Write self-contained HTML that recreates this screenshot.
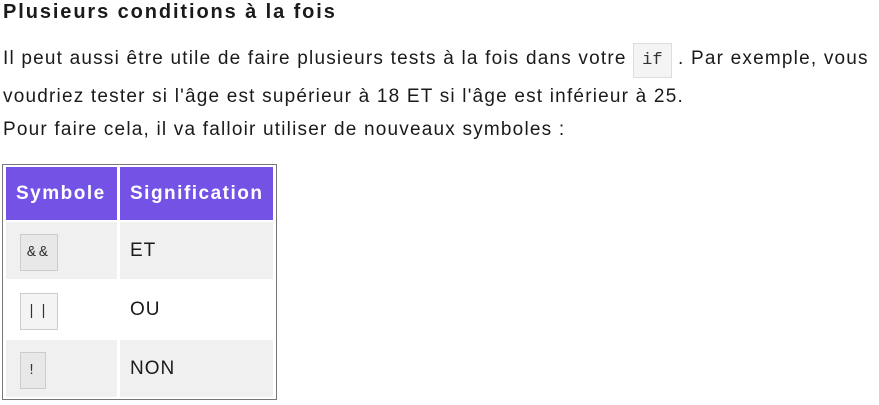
<!DOCTYPE html><html><head><style>
body{margin:0;width:879px;height:405px;background:#fff;font-family:"Liberation Sans",sans-serif;color:#1a1a1a;position:relative;overflow:hidden}
.a{position:absolute;white-space:nowrap}
h1{position:absolute;left:3px;top:1px;margin:0;font-size:20px;font-weight:bold;letter-spacing:1.9px}
.p{font-size:19px;left:3px;letter-spacing:1.2px}
code{font-family:"Liberation Mono",monospace;font-size:17px;background:#f4f4f4;border:1px solid #ddd;padding:7px 8px;color:#333;letter-spacing:0}
table{position:absolute;left:2px;top:164px;border:1px solid #777;border-spacing:3px 2px;padding:0}
td,th{font-size:19px;padding:0 0 0 10px;text-align:left;letter-spacing:1px}
th{background:#7452e6;color:#fff;height:53px;font-weight:bold;letter-spacing:1.5px}
.g td{background:#f0f0f0}
tr.r td{height:57px}
td code{font-size:15px;padding:9px 6px;background:#e8e8e8;border-color:#ccc;letter-spacing:3px;margin-left:4px}
</style></head><body>
<h1>Plusieurs conditions à la fois</h1>
<div class="a p" style="top:48px">Il peut aussi être utile de faire plusieurs tests à la fois dans votre <code>if</code> . Par exemple, vous</div>
<div class="a p" style="top:86px">voudriez tester si l'âge est supérieur à 18 ET si l'âge est inférieur à 25.</div>
<div class="a p" style="top:119px">Pour faire cela, il va falloir utiliser de nouveaux symboles :</div>
<table>
<tr><th style="width:101px">Symbole</th><th style="width:143px">Signification</th></tr>
<tr class="r g"><td><code>&amp;&amp;</code></td><td>ET</td></tr>
<tr class="r"><td><code style="background:#f4f4f4">||</code></td><td>OU</td></tr>
<tr class="r g"><td><code>!</code></td><td>NON</td></tr>
</table>
</body></html>
